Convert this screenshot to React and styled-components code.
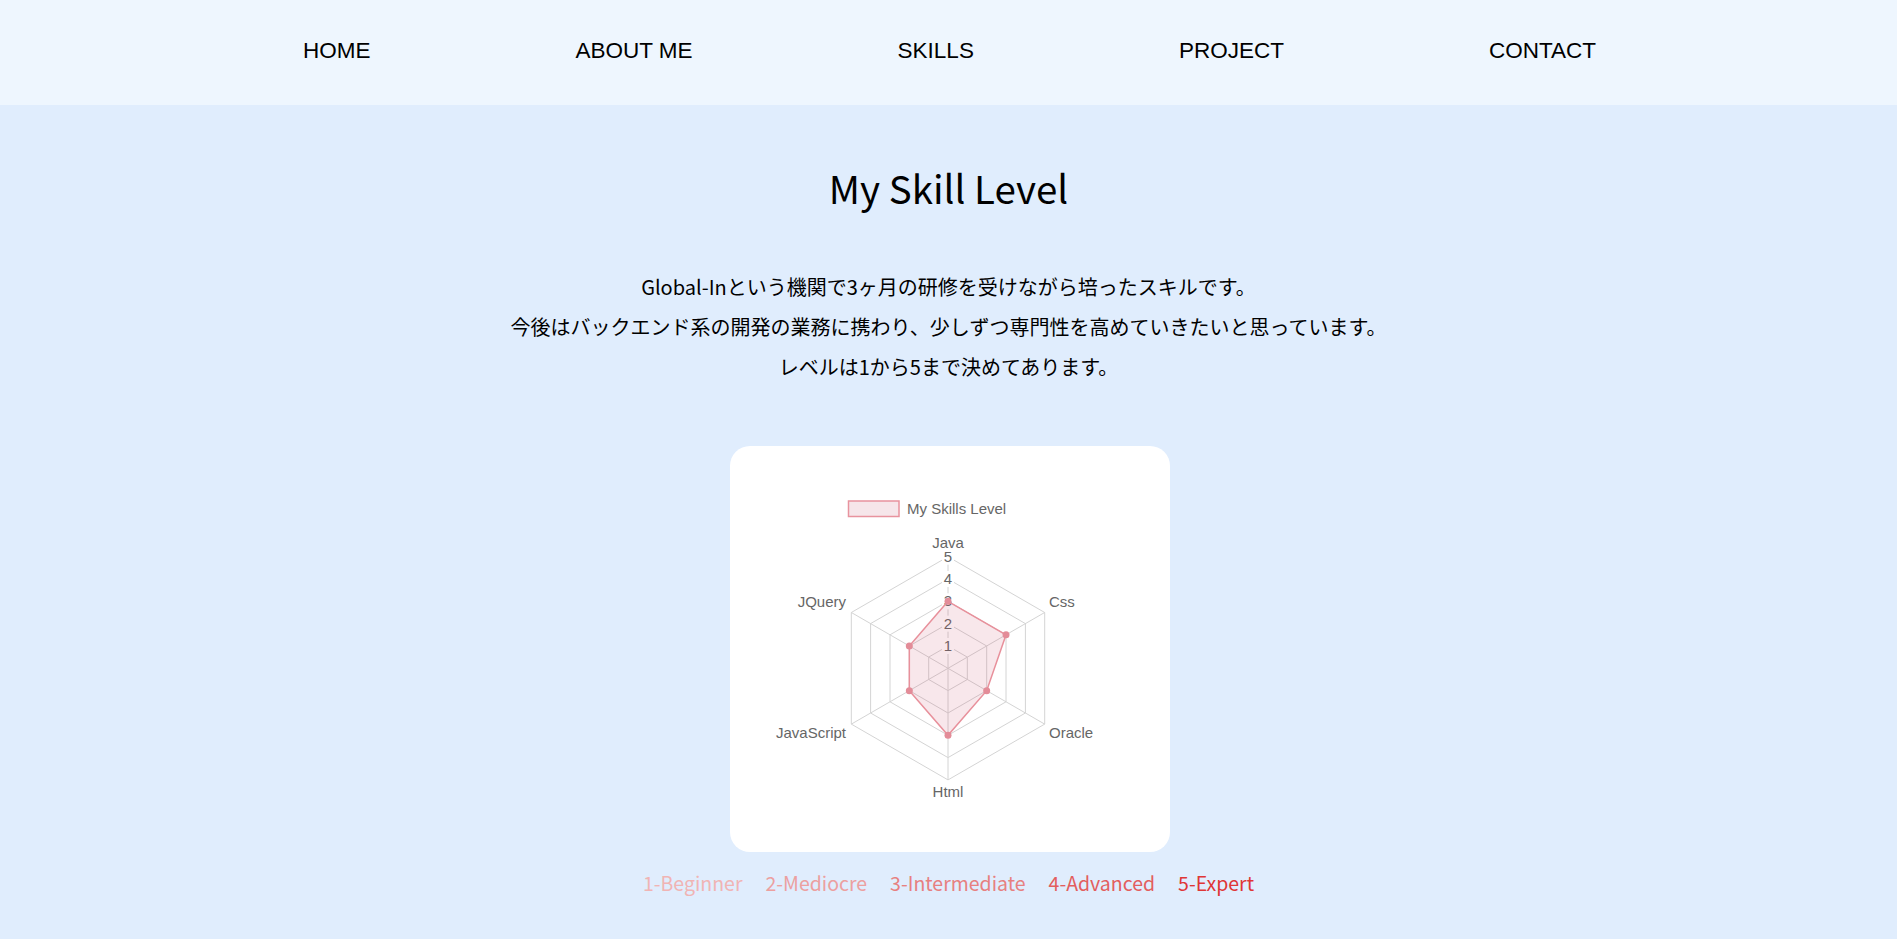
import React from 'react'
import styled, { createGlobalStyle } from 'styled-components'

const GlobalStyle = createGlobalStyle`
  html, body {
    margin: 0;
    padding: 0;
    background: #e0edfd;
  }
  body {
    font-family: "Noto Sans CJK JP", "Noto Sans", sans-serif;
    color: #000;
  }
`

const Page = styled.div`
  min-height: 100vh;
  background: #e0edfd;
`

const NavBar = styled.nav`
  height: 105px;
  background: #eef6fe;
  display: flex;
  align-items: center;
  justify-content: center;
  gap: 205px;
  padding-left: 2px;
  box-sizing: border-box;
`

const NavLink = styled.a`
  font-family: "Liberation Sans", Arial, sans-serif;
  font-size: 22.5px;
  color: #000;
  text-decoration: none;
  padding-bottom: 4px;
`

const Main = styled.main`
  display: flex;
  flex-direction: column;
  align-items: center;
`

const Title = styled.h2`
  margin: 52px 0 0;
  font-size: 38.5px;
  font-weight: 400;
  line-height: 60px;
`

const Intro = styled.p`
  margin: 50px 0 0;
  font-size: 20px;
  line-height: 40px;
  text-align: center;
`

const ChartCard = styled.div`
  margin-top: 59px;
  width: 440px;
  height: 406px;
  background: #fff;
  border-radius: 20px;
  margin-left: 2px;
`

const LevelRow = styled.div`
  display: flex;
  gap: 23px;
  margin-top: 16px;
  font-size: 19.5px;
  line-height: 30px;
`

const Level = styled.span`
  color: ${props => props.color};
`

const navItems = ['HOME', 'ABOUT ME', 'SKILLS', 'PROJECT', 'CONTACT']

const skills = [
  { name: 'Java', value: 3 },
  { name: 'Css', value: 3 },
  { name: 'Oracle', value: 2 },
  { name: 'Html', value: 3 },
  { name: 'JavaScript', value: 2 },
  { name: 'JQuery', value: 2 },
]

const levels = [
  { label: '1-Beginner', color: '#f0b4b4' },
  { label: '2-Mediocre', color: '#eca0a0' },
  { label: '3-Intermediate', color: '#e78080' },
  { label: '4-Advanced', color: '#e35e5e' },
  { label: '5-Expert', color: '#df3636' },
]

const CX = 218
const CY = 222.3
const STEP = 22.33

const point = (i, r) => {
  const a = -Math.PI / 2 + (i * Math.PI) / 3
  return [CX + r * Math.cos(a), CY + r * Math.sin(a)]
}

const ring = k =>
  skills.map((_, i) => point(i, k * STEP).map(n => n.toFixed(1)).join(',')).join(' ')

const labelPos = [
  { x: 218, y: 97, anchor: 'middle' },
  { x: 319, y: 156, anchor: 'start' },
  { x: 319, y: 287, anchor: 'start' },
  { x: 218, y: 346, anchor: 'middle' },
  { x: 116, y: 287, anchor: 'end' },
  { x: 116, y: 156, anchor: 'end' },
]

const RadarChart = () => {
  const dataPts = skills.map((s, i) => point(i, s.value * STEP))
  return (
    <svg width="440" height="406" viewBox="0 0 440 406" fontFamily="Liberation Sans, Arial, sans-serif">
      <rect x="118.5" y="55" width="50.5" height="15.5" fill="#f6e6ea" stroke="#e8939e" strokeWidth="1.5" />
      <text x="177" y="68" fontSize="15" fill="#666">My Skills Level</text>

      {[1, 2, 3, 4, 5].map(k => (
        <polygon key={k} points={ring(k)} fill="none" stroke="#d4d4d4" strokeWidth="1" />
      ))}
      {skills.map((_, i) => {
        const [x, y] = point(i, 5 * STEP)
        return <line key={i} x1={CX} y1={CY} x2={x} y2={y} stroke="#d4d4d4" strokeWidth="1" />
      })}

      {[1, 2, 3, 4, 5].map(k => (
        <g key={k}>
          <rect x={CX - 6} y={CY - k * STEP - 8} width="12" height="16" fill="#fff" />
          <text x={CX} y={CY - k * STEP + 5} fontSize="15" fill="#666" textAnchor="middle">{k}</text>
        </g>
      ))}

      <polygon
        points={dataPts.map(p => p.join(',')).join(' ')}
        fill="rgba(200, 70, 100, 0.13)"
        stroke="#e8909b"
        strokeWidth="1.5"
      />
      {dataPts.map(([x, y], i) => (
        <circle key={i} cx={x} cy={y} r="3.5" fill="#e38c98" />
      ))}

      {skills.map((s, i) => (
        <text
          key={s.name}
          x={labelPos[i].x}
          y={labelPos[i].y + 5}
          fontSize="15"
          fill="#666"
          textAnchor={labelPos[i].anchor}
        >
          {s.name}
        </text>
      ))}
    </svg>
  )
}

const App = () => (
  <Page>
    <GlobalStyle />
    <NavBar>
      {navItems.map(item => (
        <NavLink key={item} href="#">{item}</NavLink>
      ))}
    </NavBar>
    <Main>
      <Title>My Skill Level</Title>
      <Intro>
        Global-Inという機関で3ヶ月の研修を受けながら培ったスキルです。
        <br />
        今後はバックエンド系の開発の業務に携わり、少しずつ専門性を高めていきたいと思っています。
        <br />
        レベルは1から5まで決めてあります。
      </Intro>
      <ChartCard>
        <RadarChart />
      </ChartCard>
      <LevelRow>
        {levels.map(l => (
          <Level key={l.label} color={l.color}>{l.label}</Level>
        ))}
      </LevelRow>
    </Main>
  </Page>
)

export default App
